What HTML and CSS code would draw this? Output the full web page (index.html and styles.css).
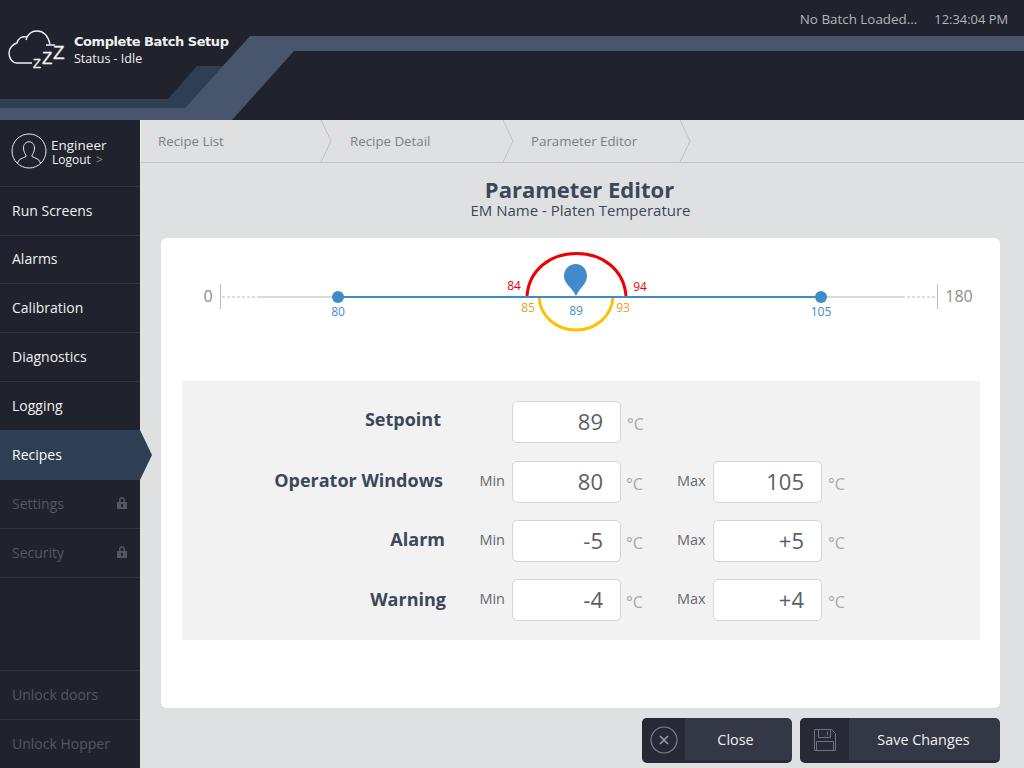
FILE: index.html
```html
<!DOCTYPE html>
<html lang="en">
<head>
    <meta charset="UTF-8">
    <title>Parameter Editor</title>
    <link rel="stylesheet" href="styles.css">
</head>
<body>
    <header class="top">
        <svg class="bands" width="1024" height="120" viewBox="0 0 1024 120">
            <polygon points="197,66 224,66 185,108 0,108 0,99 168,99" fill="#2e3f54"/>
            <polygon points="250,36 1024,36 1024,51 294,51 232,120 0,120 0,108 185,108" fill="#47566c"/>
        </svg>
        <div class="brand">
            <svg class="cloud" width="60" height="44" viewBox="8 28 60 44" fill="none" stroke="#f0f0f0" stroke-width="1.4">
                <path d="M32 63H17C12 63 9 58 9 53C9 48 13 44 17 43C18 38 22 36 27 37"/>
                <path d="M26 40C28 33 32 31 37 31C44 31 48 36 50 44M46 45H55"/>
                <text x="33" y="68" class="zz z1">Z</text>
                <text x="42" y="64" class="zz z2">Z</text>
                <text x="53" y="59" class="zz z3">Z</text>
            </svg>
            <div>
                <div class="brand-title">Complete Batch Setup</div>
                <div class="brand-status">Status - Idle</div>
            </div>
        </div>
        <div class="top-info">
            <span class="batch">No Batch Loaded...</span>
            <span class="clock">12:34:04 PM</span>
        </div>
    </header>

    <div class="main">
        <nav class="side">
            <div class="user">
                <svg width="36" height="36" viewBox="0 0 36 36" fill="none" stroke="#e8e8e8" stroke-width="1">
                    <circle cx="18" cy="18" r="17"/>
                    <path d="M12.5 15C12.5 11 15 8.800 18 8.800C21 8.800 23.500 11 23.500 15C23.500 18 22 21 21 22V23.500C24 25 28.500 26 29.500 30M6.500 30C7.500 26 12 25 15 23.500V22C14 21 12.500 18 12.500 15"/>
                </svg>
                <div class="user-text">
                    <div class="user-name">Engineer</div>
                    <div class="user-logout">Logout <span class="gt">&gt;</span></div>
                </div>
            </div>
            <a class="item">Run Screens</a>
            <a class="item short">Alarms</a>
            <a class="item">Calibration</a>
            <a class="item">Diagnostics</a>
            <a class="item">Logging</a>
            <a class="item active">Recipes</a>
            <a class="item off">Settings
                <svg width="12" height="14" viewBox="0 0 12 14"><path fill="#55575f" fill-rule="evenodd" d="M3 6V4.500C3 2.500 4.300 1 6 1C7.700 1 9 2.500 9 4.500V6H11V13H1V6ZM4.500 6H7.500V4.500C7.500 3.300 6.900 2.500 6 2.500C5.100 2.500 4.500 3.300 4.500 4.500ZM5 8V11H7V8Z"/></svg>
            </a>
            <a class="item off">Security
                <svg width="12" height="14" viewBox="0 0 12 14"><path fill="#55575f" fill-rule="evenodd" d="M3 6V4.500C3 2.500 4.300 1 6 1C7.700 1 9 2.500 9 4.500V6H11V13H1V6ZM4.500 6H7.500V4.500C7.500 3.300 6.900 2.500 6 2.500C5.100 2.500 4.500 3.300 4.500 4.500ZM5 8V11H7V8Z"/></svg>
            </a>
            <div class="side-bottom">
                <a class="item off">Unlock doors</a>
                <a class="item off">Unlock Hopper</a>
            </div>
        </nav>

        <section class="content">
            <div class="crumbs">
                <div class="crumb c1">Recipe List<svg width="12" height="42" viewBox="0 0 12 42"><path d="M1 0L11 21L1 42" fill="none" stroke="#bfc0c2"/></svg></div>
                <div class="crumb c2">Recipe Detail<svg width="12" height="42" viewBox="0 0 12 42"><path d="M1 0L11 21L1 42" fill="none" stroke="#bfc0c2"/></svg></div>
                <div class="crumb c3">Parameter Editor<svg width="12" height="42" viewBox="0 0 12 42"><path d="M1 0L11 21L1 42" fill="none" stroke="#bfc0c2"/></svg></div>
            </div>

            <h1 class="title">Parameter Editor</h1>
            <div class="subtitle">EM Name - Platen Temperature</div>

            <div class="card">
                <svg class="scale" width="839" height="143" viewBox="161 238 839 143">
                    <text x="208" y="302" class="end" text-anchor="middle">0</text>
                    <text x="959" y="302" class="end" text-anchor="middle">180</text>
                    <path d="M220.500 284V309M937.500 284V309" stroke="#bdbdbd"/>
                    <path d="M222 297H258M902 297H935" stroke="#bdbdbd" stroke-dasharray="3 2"/>
                    <path d="M258 297H338M821 297H902" stroke="#b5b5b5" stroke-width="1.200"/>
                    <path d="M527 296C529 270 550 253.500 576.500 253.500C603 253.500 624 270 626 296" fill="none" stroke="#ee0000" stroke-width="3"/>
                    <path d="M539 297C540 316 556 330 576 330C596 330 612 316 613 297" fill="none" stroke="#ffc000" stroke-width="3"/>
                    <path d="M338 297H821" stroke="#428bca" stroke-width="2"/>
                    <circle cx="338" cy="297" r="6" fill="#428bca"/>
                    <circle cx="821" cy="297" r="6" fill="#428bca"/>
                    <path d="M576 296C572 287 564 284 564 276C564 269 569 264 576 264C582 264 587 269 587 276C587 284 580 287 576 296Z" fill="#428bca"/>
                    <text x="514" y="290" class="num red" text-anchor="middle">84</text>
                    <text x="640" y="291" class="num red" text-anchor="middle">94</text>
                    <text x="528" y="312" class="num amber" text-anchor="middle">85</text>
                    <text x="623" y="312" class="num amber" text-anchor="middle">93</text>
                    <text x="576" y="315" class="num blue" text-anchor="middle">89</text>
                    <text x="338" y="316" class="num blue" text-anchor="middle">80</text>
                    <text x="821" y="316" class="num blue" text-anchor="middle">105</text>
                </svg>

                <div class="panel">
                    <div class="row">
                        <div class="name n1">Setpoint</div>
                        <div class="lim"></div>
                        <div class="field">89</div>
                        <div class="unit">°C</div>
                    </div>
                    <div class="row">
                        <div class="name n2">Operator Windows</div>
                        <div class="lim">Min</div>
                        <div class="field">80</div>
                        <div class="unit">°C</div>
                        <div class="lim max">Max</div>
                        <div class="field">105</div>
                        <div class="unit">°C</div>
                    </div>
                    <div class="row">
                        <div class="name n3">Alarm</div>
                        <div class="lim">Min</div>
                        <div class="field">-5</div>
                        <div class="unit">°C</div>
                        <div class="lim max">Max</div>
                        <div class="field">+5</div>
                        <div class="unit">°C</div>
                    </div>
                    <div class="row">
                        <div class="name n4">Warning</div>
                        <div class="lim">Min</div>
                        <div class="field">-4</div>
                        <div class="unit">°C</div>
                        <div class="lim max">Max</div>
                        <div class="field">+4</div>
                        <div class="unit">°C</div>
                    </div>
                </div>
            </div>

            <div class="actions">
                <button class="btn close">
                    <span class="btn-icon">
                        <svg width="28" height="28" viewBox="0 0 28 28" fill="none" stroke="#7d7f87" stroke-width="1.200"><circle cx="14" cy="14" r="13"/><path d="M10 10L18 18M18 10L10 18" stroke="#a0a2a8" stroke-width="1.500"/></svg>
                    </span>
                    <span class="btn-text">Close</span>
                </button>
                <button class="btn save">
                    <span class="btn-icon">
                        <svg width="24" height="24" viewBox="0 0 24 24" fill="none" stroke="#71737b" stroke-width="1"><path d="M1.500 1.500H18.500L22.500 5.500V22.500H1.500Z"/><path d="M5.500 1.500V9.500H17.500V1.500M14.500 3.500V7.500M3.500 22.500V13.500H20.500V22.500"/></svg>
                    </span>
                    <span class="btn-text">Save Changes</span>
                </button>
            </div>
        </section>
    </div>
</body>
</html>
```

FILE: styles.css
```css
* {
    box-sizing: border-box;
}
html, body {
    margin: 0;
    height: 768px;
    overflow: hidden;
}
body {
    font-family: "Open Sans", "Noto Sans", sans-serif;
    background-color: #dfe0e1;
    color: #3b4859;
}

/* top bar */
.top {
    position: relative;
    height: 120px;
    background-color: #20232d;
    color: #f0f0f0;
}
.bands {
    position: absolute;
    left: 0;
    top: 0;
}
.brand {
    position: relative;
    display: flex;
    align-items: flex-start;
    padding: 28px 0 0 8px;
    gap: 6px;
}
.cloud {
    display: block;
}
.zz {
    font-family: "Liberation Sans", sans-serif;
    fill: #f0f0f0;
    stroke: #f0f0f0;
    stroke-width: 0.3;
}
.z1 { font-size: 13px; }
.z2 { font-size: 17px; }
.z3 { font-size: 19px; }
.brand-title {
    font-family: "DejaVu Sans", sans-serif;
    font-size: 13px;
    font-weight: bold;
    line-height: 18px;
    margin-top: 5px;
    letter-spacing: -0.45px;
}
.brand-status {
    font-size: 12.500px;
    line-height: 16px;
}
.top-info {
    position: absolute;
    right: 16px;
    top: 10px;
    display: flex;
    gap: 17px;
    line-height: 18px;
    color: #b4b5b8;
}
.batch {
    font-size: 13.400px;
}
.clock {
    font-size: 12.900px;
}

.main {
    display: flex;
    height: 648px;
}

/* sidebar */
.side {
    width: 140px;
    flex: none;
    display: flex;
    flex-direction: column;
    background-color: #20232d;
    color: #f0f0f0;
}
.user {
    display: flex;
    align-items: center;
    gap: 4px;
    height: 67px;
    padding: 0 0 5px 11px;
    border-bottom: 1px solid #33363f;
}
.user svg {
    display: block;
}
.user-text {
    padding-top: 4px;
}
.user-name {
    font-size: 13.500px;
    line-height: 15px;
}
.user-logout {
    margin-left: 1px;
    font-size: 12px;
    line-height: 14px;
}
.gt {
    color: #8a8c93;
    margin-left: 2px;
}
.item {
    position: relative;
    display: flex;
    align-items: center;
    justify-content: space-between;
    flex: none;
    height: 49px;
    padding: 0 12px 2px;
    font-size: 14px;
    border-bottom: 1px solid #33363f;
}
.item.short {
    height: 48px;
}
.item.active {
    height: 50px;
    margin-top: -1px;
    background-color: #2e3f54;
    border-bottom: none;
    color: #fff;
}
.item.active::after {
    content: "";
    position: absolute;
    left: 140px;
    top: 0;
    border-left: 12px solid #2e3f54;
    border-top: 25px solid transparent;
    border-bottom: 25px solid transparent;
}
.item.off {
    color: #55575f;
}
.side-bottom {
    margin-top: auto;
    border-top: 1px solid #33363f;
}
.side-bottom .item:last-child {
    height: 48px;
    border-bottom: none;
}

/* right side */
.content {
    flex: 1;
    min-width: 0;
}
.crumbs {
    display: flex;
    height: 43px;
    border-bottom: 1px solid #c4c5c7;
    border-left: 1px solid #eeeeee;
    font-size: 13.300px;
    color: #7c7f85;
}
.crumb {
    display: flex;
    align-items: center;
    justify-content: space-between;
    line-height: 40px;
}
.crumb svg {
    display: block;
}
.c1 { width: 191px; padding-left: 17px; }
.c2 { width: 182px; padding-left: 18px; }
.c3 { width: 177px; padding-left: 17px; }
.title {
    margin: 13px 0 0;
    padding-right: 5px;
    font-family: "Open Sans", sans-serif;
    font-size: 22px;
    line-height: 26px;
    font-weight: bold;
    text-align: center;
}
.subtitle {
    margin-top: 1px;
    padding-right: 3px;
    font-size: 15px;
    line-height: 15px;
    text-align: center;
}
.card {
    width: 839px;
    height: 470px;
    margin: 20px 0 0 21px;
    background-color: #fff;
    border-radius: 6px;
}
.scale {
    display: block;
}
.scale text {
    font-family: "Open Sans", sans-serif;
}
.end {
    font-size: 16px;
    fill: #8d8d8d;
}
.num {
    font-size: 12px;
}
.red { fill: #ee0000; }
.amber { fill: #e0a030; }
.blue { fill: #428bca; }

.panel {
    width: 798px;
    height: 259px;
    margin-left: 21px;
    padding-top: 20px;
    background-color: #f2f2f2;
}
.row {
    display: flex;
    align-items: center;
    height: 42px;
    margin-bottom: 17px;
}
.row:first-child {
    margin-bottom: 18px;
}
.name {
    width: 261px;
    padding-bottom: 4px;
    text-align: right;
    font-size: 18px;
    font-weight: bold;
}
.n1 { width: 259px; padding-bottom: 6px; }
.n3 { width: 263px; }
.n4 { width: 264px; padding-bottom: 2px; }
.lim {
    padding-bottom: 3px;
    font-size: 14.500px;
    color: #666a70;
}
.row .lim:nth-child(2) {
    width: 69px;
    flex: none;
    text-align: right;
    padding-right: 7px;
}
.row .n1 + .lim { width: 71px; }
.row .n3 + .lim { width: 67px; }
.row .n4 + .lim { width: 66px; }
.max {
    flex: none;
    width: 68px;
    padding-left: 32px;
}
.field {
    width: 109px;
    height: 42px;
    padding-right: 17px;
    background-color: #fff;
    border: 1px solid #d4d4d4;
    border-radius: 5px;
    font-size: 22px;
    line-height: 38px;
    text-align: right;
    color: #5b5e66;
}
.unit {
    width: 24px;
    padding: 4px 0 0 5px;
    font-size: 16px;
    white-space: nowrap;
    color: #a8a9ad;
}
.unit:last-child {
    padding-left: 6px;
}

/* bottom buttons */
.actions {
    display: flex;
    justify-content: flex-end;
    gap: 8px;
    width: 860px;
    margin-top: 10px;
}
.btn {
    display: flex;
    height: 45px;
    padding: 0;
    border: none;
    border-bottom: 3px solid #282b36;
    border-radius: 5px;
    background-color: #333746;
    color: #f0f0f0;
    font-family: inherit;
    font-size: 14.400px;
    overflow: hidden;
}
.btn-icon {
    display: flex;
    align-items: center;
    justify-content: center;
    height: 100%;
    padding-top: 2px;
    background-color: #272a36;
}
.btn-text {
    flex: 1;
    line-height: 43px;
    text-align: center;
}
.close { width: 150px; }
.close .btn-icon { width: 43px; }
.close .btn-text { padding-right: 6px; }
.save { width: 200px; }
.save .btn-icon { width: 49px; }
.save .btn-text { padding-right: 2px; }
```
